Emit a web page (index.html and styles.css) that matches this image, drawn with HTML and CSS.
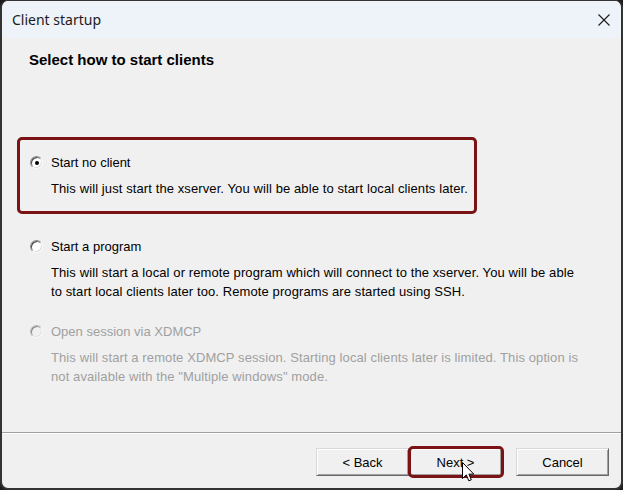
FILE: index.html
```html
<!DOCTYPE html>
<html lang="en">
<head>
<meta charset="utf-8">
<title>Client startup</title>
<link rel="stylesheet" href="styles.css">
</head>
<body>
<div class="window">
  <div class="titlebar">
    <span class="title">Client startup</span>
    <svg class="close" width="12" height="12" viewBox="0 0 12 12" aria-label="Close">
      <path d="M0.5 0.5 L11.5 11.5 M11.5 0.5 L0.5 11.5" stroke="#1a1a1a" stroke-width="1.1" fill="none"/>
    </svg>
  </div>

  <div class="header">
    <h1>Select how to start clients</h1>
  </div>

  <div class="options">
    <div class="option highlight">
      <div class="choice"><span class="radio checked"></span><span>Start no client</span></div>
      <p class="desc">This will just start the xserver. You will be able to start local clients later.</p>
    </div>
    <div class="option">
      <div class="choice"><span class="radio"></span><span>Start a program</span></div>
      <p class="desc">This will start a local or remote program which will connect to the xserver. You will be able<br>to start local clients later too. Remote programs are started using SSH.</p>
    </div>
    <div class="option disabled">
      <div class="choice"><span class="radio"></span><span>Open session via XDMCP</span></div>
      <p class="desc">This will start a remote XDMCP session. Starting local clients later is limited. This option is<br>not available with the "Multiple windows" mode.</p>
    </div>
  </div>

  <div class="footer">
    <div class="buttons">
      <button class="btn">&lt; Back</button>
      <button class="btn focused">Next &gt;</button>
      <button class="btn cancel">Cancel</button>
    </div>
  </div>
</div>

<svg class="cursor" width="13" height="21" viewBox="0 0 13 21">
  <path d="M0.5 0.5 L0.5 16.5 L4.3 12.9 L6.8 18.8 L9.3 17.8 L6.9 12.1 L11.8 12.1 Z" fill="#fff" stroke="#000" stroke-width="1" stroke-linejoin="miter"/>
</svg>
</body>
</html>
```

FILE: styles.css
```css
html, body {
  margin: 0;
  padding: 0;
  background: #1d1d1d;
}

body {
  position: relative;
  width: 623px;
  height: 490px;
  overflow: hidden;
  font-family: "Liberation Sans", Arial, sans-serif;
  font-size: 13px;
  color: #000;
}

.window {
  box-sizing: border-box;
  width: 623px;
  height: 490px;
  display: flex;
  flex-direction: column;
  background: #f0f0f0;
  border: 2px solid #333;
  border-top-width: 1px;
  border-radius: 8px;
  overflow: hidden;
}

/* title bar */
.titlebar {
  height: 37px;
  flex: none;
  display: flex;
  align-items: center;
  justify-content: space-between;
  padding: 0 11px 0 10px;
  background: #eef2f9;
}

.title {
  font-family: "Noto Sans", "Open Sans", sans-serif;
  font-size: 14px;
  color: #1b1b1b;
  margin-top: -1px;
}

.close {
  display: block;
}

/* wizard header */
.header {
  flex: none;
  padding: 13px 0 0 27px;
}

.header h1 {
  margin: 0;
  font-size: 15px;
  line-height: 18px;
  font-weight: bold;
}

/* option list */
.options {
  flex: 1;
  padding: 68px 0 0 15px;
  display: flex;
  flex-direction: column;
  gap: 21px;
}

.option {
  padding-left: 13px;
}

.option.highlight {
  width: 444px;
  padding: 13px 0 13px 10px;
  border: 3px solid #7b1315;
  border-radius: 5px;
  margin-bottom: 2px;
}

.choice {
  display: flex;
  align-items: center;
  gap: 8px;
  height: 19px;
  line-height: 19px;
}

.desc {
  margin: 7px 0 0 21px;
  line-height: 19px;
  letter-spacing: 0.1px;
}

.disabled {
  color: #a0a0a0;
}

/* classic round option button */
.radio {
  position: relative;
  box-sizing: border-box;
  width: 13px;
  height: 13px;
  flex: none;
  border-radius: 50%;
  background: #fff;
  border: 1px solid;
  border-color: #8c8c8c #fafafa #fafafa #8c8c8c;
  box-shadow: inset 1px 1px 0 #4a4a4a, inset -1px -1px 0 #dcdcdc;
}

.radio.checked::after {
  content: "";
  position: absolute;
  left: 3.5px;
  top: 3.5px;
  width: 4px;
  height: 4px;
  border-radius: 50%;
  background: #000;
}

.disabled .radio {
  background: #f0f0f0;
  border-color: #b4b4b4 #fafafa #fafafa #b4b4b4;
  box-shadow: inset 1px 1px 0 #8a8a8a, inset -1px -1px 0 #e3e3e3;
}

/* button row */
.footer {
  flex: none;
  border-top: 1px solid #a0a0a0;
  box-shadow: inset 0 1px 0 #fff;
  padding: 15px 12px 12px 0;
}

.buttons {
  display: flex;
  justify-content: flex-end;
}

.btn {
  position: relative;
  box-sizing: border-box;
  width: 93px;
  height: 28px;
  padding: 0;
  font-family: "Liberation Sans", Arial, sans-serif;
  font-size: 13px;
  color: #000;
  background: #f0f0f0;
  border: 1px solid;
  border-color: #d8d8d8 #696969 #696969 #d8d8d8;
  box-shadow: inset 1px 1px 0 #fff, inset -1px -1px 0 #a0a0a0;
}

.btn.cancel {
  margin-left: 14px;
}

.btn.focused::after {
  content: "";
  position: absolute;
  top: -3px;
  bottom: -3px;
  left: -2px;
  right: -3px;
  border: 3px solid #7b1315;
  border-radius: 5px;
}

/* mouse pointer resting over the Next button */
.cursor {
  position: absolute;
  left: 462px;
  top: 462px;
}
```
